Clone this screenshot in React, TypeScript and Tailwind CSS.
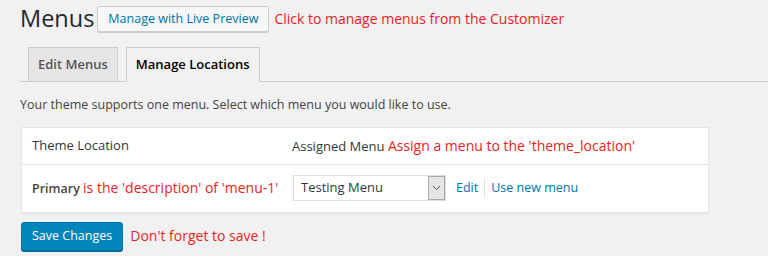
import React from "react";

const font = { fontFamily: '"Open Sans", "Noto Sans", sans-serif' };

function Note({ children }: { children: React.ReactNode }) {
  return <span className="text-[14px] text-[#ed1c24]">{children}</span>;
}

export default function App() {
  return (
    <div
      className="h-[256px] w-[768px] overflow-hidden bg-[#f1f1f1] pl-5 text-[13px] text-[#444]"
      style={font}
    >
      <div className="flex h-[36px] items-center pt-[2px]">
        <h1 className="mr-[3px] text-[23.5px] leading-none text-[#23282d]">Menus</h1>
        <button className="flex h-[26px] items-center rounded-[3px] border border-[#ccc] bg-[#f7f7f7] px-[10px] text-[12.5px] text-[#0073aa] shadow-[0_1px_0_#ccc]">
          Manage with Live Preview
        </button>
        <span className="ml-[5px]">
          <Note>Click to manage menus from the Customizer</Note>
        </span>
      </div>

      <div className="mt-[11px] flex h-[35px] items-end border-b border-[#ccc] pl-2">
        <div className="-mb-px flex h-[35px] items-center border border-[#ccc] bg-[#e5e5e5] px-[9px] text-[13px] font-semibold text-[#555]">
          Edit Menus
        </div>
        <div className="-mb-px ml-2 flex h-[35px] items-center border border-[#ccc] border-b-[#f1f1f1] bg-[#f1f1f1] px-[9px] text-[13px] font-semibold text-black">
          Manage Locations
        </div>
      </div>

      <p className="mt-[17px] text-[12.5px] leading-none">
        Your theme supports one menu. Select which menu you would like to use.
      </p>

      <div className="mt-[15px] ml-px w-[688px] border border-[#e5e5e5] bg-white shadow-[0_1px_1px_rgba(0,0,0,0.04)]">
        <div className="flex h-[37px] items-center border-b border-[#e1e1e1] text-[13px] text-[#32373c]">
          <div className="w-[270px] pl-[10px]">Theme Location</div>
          <div>
            Assigned Menu <Note>Assign a menu to the 'theme_location'</Note>
          </div>
        </div>
        <div className="flex h-[47px] items-center text-[12.5px]">
          <div className="w-[270px] pl-[10px]">
            <span className="font-semibold text-[#444]">Primary</span>{" "}
            <Note>is the 'description' of 'menu-1'</Note>
          </div>
          <div className="ml-[1px] flex h-[26px] w-[153px] items-stretch border border-[#ddd] bg-white text-[13px] text-[#32373c]">
            <span className="flex flex-1 items-center pl-[7px]">Testing Menu</span>
            <span className="flex w-[17px] items-center justify-center border border-[#aaa] bg-[#e5e5e5]">
              <svg width="9" height="6" viewBox="0 0 9 6" fill="none">
                <path d="M1 1l3.5 3.5L8 1" stroke="#555" strokeWidth="1" />
              </svg>
            </span>
          </div>
          <a className="ml-[10px] text-[#0073aa]">Edit</a>
          <span className="mx-[6px] h-[18px] w-px bg-[#ddd]" />
          <a className="text-[#0073aa]">Use new menu</a>
        </div>
      </div>

      <div className="mt-[9px] ml-px flex items-center">
        <button className="flex h-[29px] items-center rounded-[3px] border border-[#0073aa] bg-[#0085ba] px-[10px] text-[12.5px] text-white shadow-[0_1px_0_#006799]">
          Save Changes
        </button>
        <span className="ml-[7px]">
          <Note>Don't forget to save !</Note>
        </span>
      </div>
    </div>
  );
}
